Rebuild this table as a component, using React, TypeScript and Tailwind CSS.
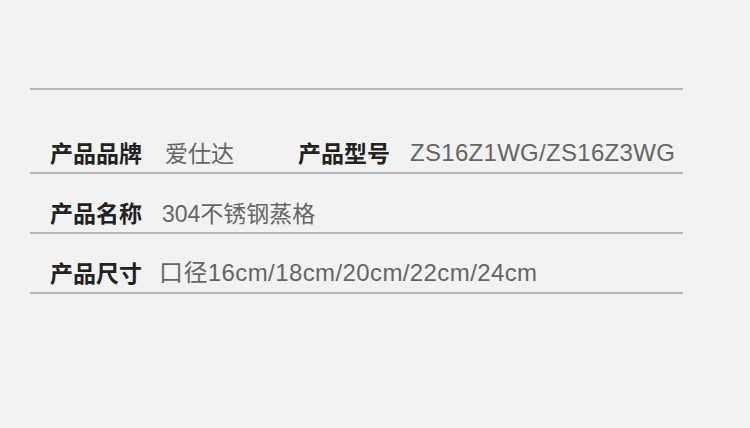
const rows = [
	{ label: '产品名称', value: '304不锈钢蒸格', valueClass: 'ml-[20px] text-[23px]' },
	{ label: '产品尺寸', value: '口径16cm/18cm/20cm/22cm/24cm', valueClass: 'ml-[17px] text-[24px] tracking-[0.4px]' },
]

export default function App() {
	return (
		<div
			className="w-[750px] h-[428px] bg-[#f2f2f2] pt-[88px] pl-[30px]"
			style={{ fontFamily: '"Liberation Sans", "Noto Sans CJK SC", sans-serif' }}
		>
			<div className="w-[653px]">
				<div className="h-[2px] bg-[#b8b8b8]" />

				<div className="flex items-end h-[84px] pb-[1px] pl-[20px] border-b-2 border-[#b8b8b8]">
					<span className="text-[23px] font-bold text-[#222]">产品品牌</span>
					<span className="ml-[23px] w-[133px] text-[23px] text-[#666]">爱仕达</span>
					<span className="text-[23px] font-bold text-[#222]">产品型号</span>
					<span className="ml-[20px] text-[24px] tracking-[0.3px] text-[#666]">ZS16Z1WG/ZS16Z3WG</span>
				</div>

				{rows.map(r => (
					<div
						key={r.label}
						className="flex items-end h-[60px] pb-[1px] pl-[20px] border-b-2 border-[#b8b8b8]"
					>
						<span className="text-[23px] font-bold text-[#222]">{r.label}</span>
						<span className={`${r.valueClass} text-[#666]`}>{r.value}</span>
					</div>
				))}
			</div>
		</div>
	)
}
